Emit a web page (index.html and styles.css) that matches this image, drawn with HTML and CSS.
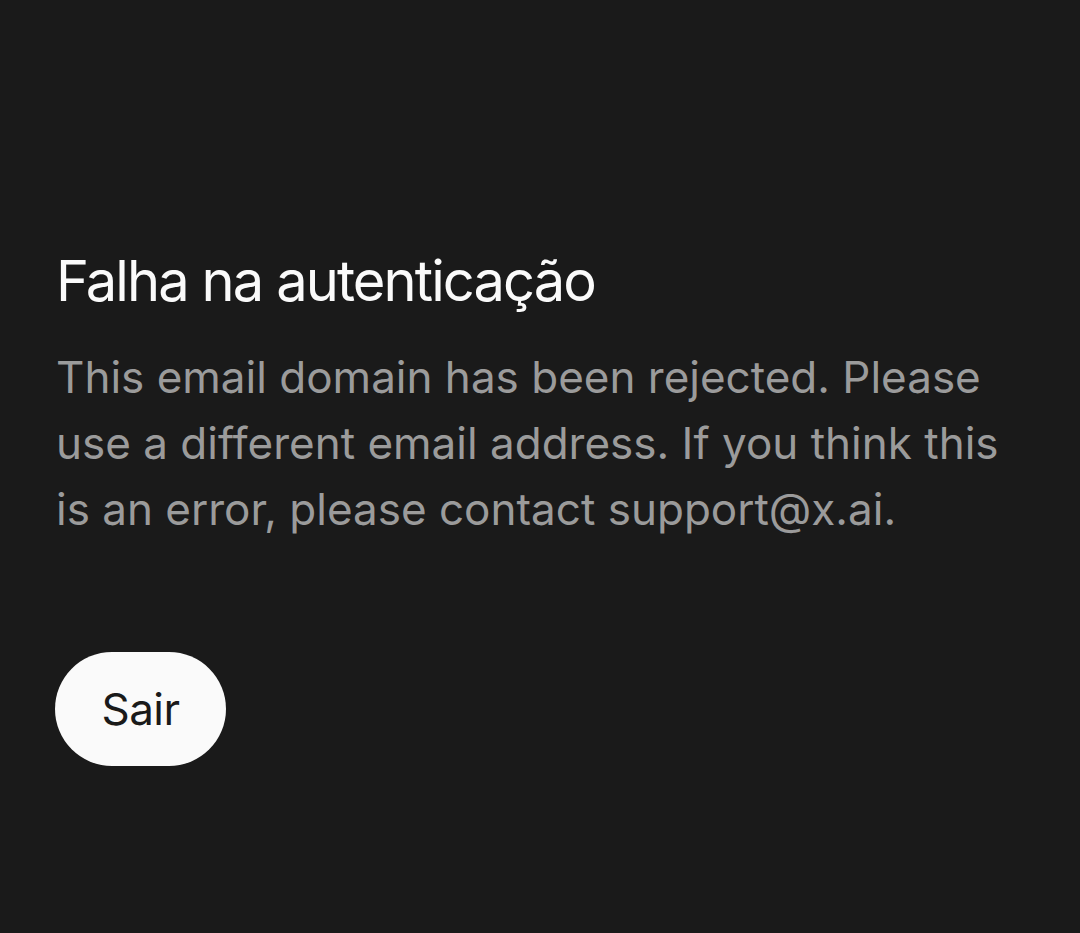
FILE: index.html
```html
<!DOCTYPE html>
<html lang="pt">
<head>
    <meta charset="UTF-8">
    <meta name="viewport" content="width=device-width, initial-scale=1.0">
    <title>Falha na autenticação</title>
    <link rel="stylesheet" href="styles.css">
</head>
<body>
    <div class="container">
        <h1 class="title">Falha na autenticação</h1>
        <p class="message">This email domain has been rejected. Please use a different email address. If you think this is an error, please contact support@x.ai.</p>
        <button class="signout">Sair</button>
    </div>
</body>
</html>
```

FILE: styles.css
```css
html, body {
    height: 100%;
}
body {
    margin: 0;
    background: #1a1a1a;
    color: #fafafa;
    font-family: Inter, "Noto Sans", sans-serif;
}
.container {
    padding: 248px 56px 0 56px;
}
.title {
    margin: 0;
    font-size: 56px;
    line-height: 67px;
    font-weight: 400;
    letter-spacing: -1.9px;
    color: #fafafa;
}
.message {
    margin: 29px 0 0 0;
    font-size: 44px;
    line-height: 66px;
    color: #9b9b9b;
}
.signout {
    display: flex;
    align-items: center;
    justify-content: center;
    margin-top: 110px;
    margin-left: -1px;
    width: 171px;
    height: 114px;
    border: none;
    border-radius: 57px;
    background: #fafafa;
    color: #1a1a1a;
    font-family: Inter, "Noto Sans", sans-serif;
    font-size: 44px;
    letter-spacing: -0.5px;
    cursor: pointer;
}
```
